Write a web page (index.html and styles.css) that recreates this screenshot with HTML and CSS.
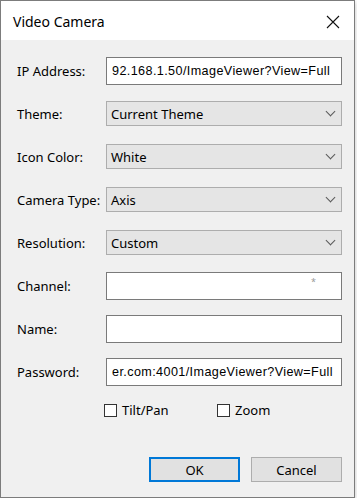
FILE: index.html
```html
<!DOCTYPE html>
<html lang="en">
  <head>
    <meta charset="UTF-8" />
    <meta name="viewport" content="width=device-width, initial-scale=1.0" />
    <title>Video Camera</title>
    <link rel="stylesheet" href="styles.css">
  </head>
  <body>
    <div id="dialog">
      <div id="titleBar">
        <span id="titleText">Video Camera</span>
        <svg id="closeIcon" width="14" height="14" viewBox="0 0 14 14">
          <path d="M1 1 L13 13 M13 1 L1 13" stroke="#111" stroke-width="1.1" fill="none" />
        </svg>
      </div>

      <div id="content">
        <div class="row">
          <label>IP Address:</label>
          <div class="field textbox"><span class="value">92.168.1.50/ImageViewer?View=Full</span></div>
        </div>
        <div class="row">
          <label>Theme:</label>
          <div class="field combo"><span>Current Theme</span><i class="chevron"></i></div>
        </div>
        <div class="row">
          <label>Icon Color:</label>
          <div class="field combo"><span>White</span><i class="chevron"></i></div>
        </div>
        <div class="row">
          <label>Camera Type:</label>
          <div class="field combo"><span>Axis</span><i class="chevron"></i></div>
        </div>
        <div class="row">
          <label>Resolution:</label>
          <div class="field combo"><span>Custom</span><i class="chevron"></i></div>
        </div>
        <div class="row">
          <label>Channel:</label>
          <div class="field textbox"><span class="marker">*</span></div>
        </div>
        <div class="row">
          <label>Name:</label>
          <div class="field textbox"></div>
        </div>
        <div class="row">
          <label>Password:</label>
          <div class="field textbox"><span class="value">er.com:4001/ImageViewer?View=Full</span></div>
        </div>

        <div id="checkRow">
          <div class="check"><span class="box"></span>Tilt/Pan</div>
          <div class="check"><span class="box"></span>Zoom</div>
        </div>

        <div id="buttonRow">
          <button class="default">OK</button>
          <button>Cancel</button>
        </div>
      </div>
    </div>
  </body>
</html>
```

FILE: styles.css
```css
body {
  margin: 0;
  background: #fff;
  font-family: "Noto Sans", "Open Sans", sans-serif;
  color: #000;
}

#dialog {
  width: 353px;
  height: 496px;
  border: 1px solid #7c7c7c;
  background: #f0f0f0;
  box-shadow: 0 2px 5px rgba(0, 0, 0, 0.25);
  display: flex;
  flex-direction: column;
}

#titleBar {
  height: 39px;
  background: #fff;
  display: flex;
  align-items: center;
  justify-content: space-between;
  padding: 0 14px 0 12px;
}

#titleText {
  font-size: 14px;
  padding-top: 2px;
}

#closeIcon {
  margin-top: 3px;
}

#content {
  padding: 9px 12px 0 16px;
  font-size: 13px;
}

.row {
  height: 43px;
  display: grid;
  grid-template-columns: 89px 1fr;
  align-items: center;
}

.row label {
  white-space: nowrap;
  padding-top: 1px;
}

.field {
  box-sizing: border-box;
  display: flex;
  align-items: center;
  overflow: hidden;
  white-space: nowrap;
  position: relative;
}

.textbox {
  height: 28px;
  background: #fff;
  border: 1px solid #7a7a7a;
  padding: 0 5px;
}

.textbox .value {
  font-family: "Liberation Sans", sans-serif;
  font-size: 12.6px;
  letter-spacing: 0.4px;
}

.marker {
  position: absolute;
  right: 25px;
  top: 2px;
  font-size: 9px;
  color: #999;
}

.combo {
  height: 25px;
  background: #e5e5e5;
  border: 1px solid #adadad;
  padding: 0 5px 0 4px;
  justify-content: space-between;
}

.chevron {
  width: 6px;
  height: 6px;
  border-right: 1px solid #5a5a5a;
  border-bottom: 1px solid #5a5a5a;
  transform: rotate(45deg);
  margin: 0 2px 4px 0;
}

#checkRow {
  height: 34px;
  display: flex;
  align-items: center;
  padding-left: 87px;
}

.check {
  display: flex;
  align-items: center;
  gap: 5px;
  width: 113px;
}

.box {
  width: 13px;
  height: 13px;
  box-sizing: border-box;
  border: 1px solid #333;
  background: #fff;
}

#buttonRow {
  display: flex;
  justify-content: flex-end;
  gap: 11px;
  margin-top: 30px;
}

button {
  width: 91px;
  height: 25px;
  font-family: inherit;
  font-size: 13px;
  background: #e1e1e1;
  border: 1px solid #adadad;
  padding: 0;
  color: #000;
}

button.default {
  border: 2px solid #0078d7;
}
```
